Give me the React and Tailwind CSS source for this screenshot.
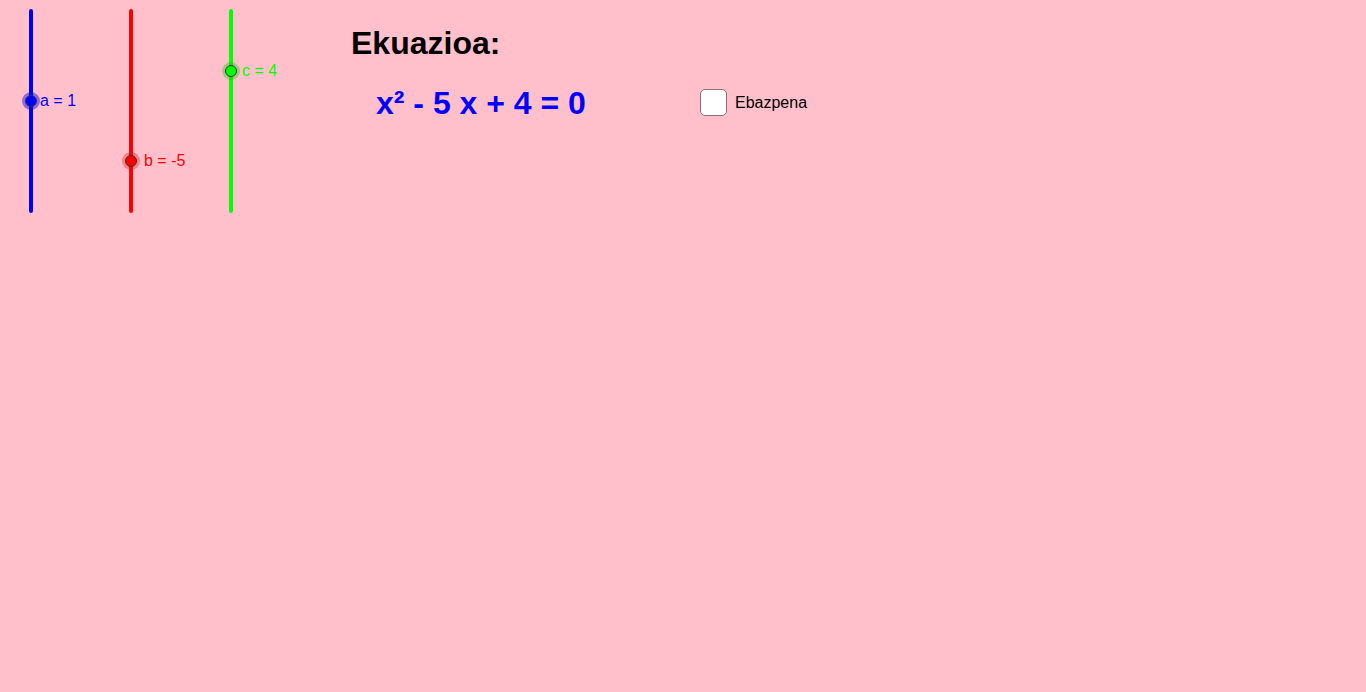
import React from "react";

const SLIDERS = [
  { name: "a", value: "1", x: 31, y: 101, color: "#0000FF", halo: "rgba(0,0,255,0.45)", labelLeft: 40 },
  { name: "b", value: "-5", x: 131, y: 161, color: "#FF0000", halo: "rgba(255,0,0,0.35)", labelLeft: 144 },
  { name: "c", value: "4", x: 231, y: 71, color: "#00FF00", halo: "rgba(0,200,0,0.35)", labelLeft: 242 },
];

const Slider = ({ s }) => (
  <>
    <svg className="absolute left-0 top-0" width="300" height="230">
      <line x1={s.x} y1="11" x2={s.x} y2="211" stroke={s.color} strokeWidth="4" strokeLinecap="round" />
      <circle cx={s.x} cy={s.y} r="9" fill={s.halo} />
      <circle cx={s.x} cy={s.y} r="5.5" fill={s.color} stroke="#333" strokeWidth="1" />
    </svg>
    <span
      className="absolute text-base leading-none whitespace-nowrap"
      style={{ left: s.labelLeft, top: s.y - 8, color: s.color }}
    >
      {s.name} = {s.value}
    </span>
  </>
);

export default function App() {
  return (
    <div
      className="relative w-full h-[692px] overflow-hidden bg-[#FFC0CB] text-black"
      style={{ fontFamily: '"Liberation Sans", Arial, sans-serif' }}
    >
      {SLIDERS.map((s) => (
        <Slider key={s.name} s={s} />
      ))}

      {/* Title */}
      <h1 className="absolute left-[351px] top-[27px] text-[32px] leading-none font-bold">Ekuazioa:</h1>

      {/* Equation */}
      <div className="absolute left-[376px] top-[87px] text-[32px] leading-none font-bold text-[#0000FF] whitespace-nowrap">
        x² - 5 x + 4 = 0
      </div>

      {/* Checkbox */}
      <label className="absolute left-[700px] top-[89px] flex items-center gap-[8px]">
        <span className="block w-[27px] h-[27px] rounded-[5px] border border-[#8a6f77] bg-white" />
        <span className="text-[16px] leading-none">Ebazpena</span>
      </label>
    </div>
  );
}
